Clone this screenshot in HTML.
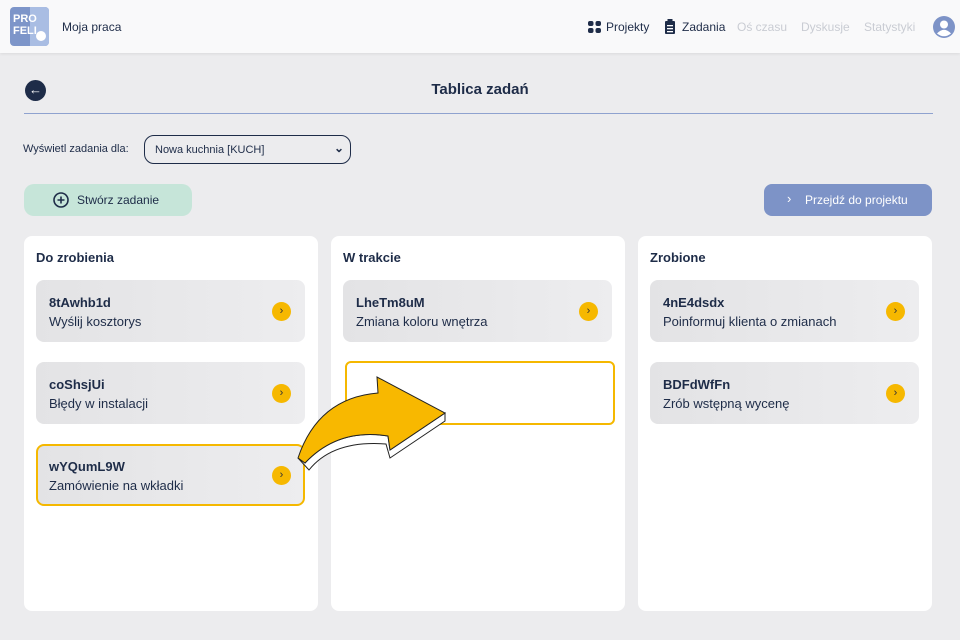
<!DOCTYPE html>
<html><head><meta charset="utf-8"><style>
*{box-sizing:border-box;margin:0;padding:0}
body{width:960px;height:640px;background:#ececee;font-family:"Liberation Sans",sans-serif;color:#1e2c48;position:relative;overflow:hidden}
.hdr{position:absolute;left:0;top:0;width:960px;height:53px;background:#f9f9fa;box-shadow:0 1px 3px rgba(0,0,0,.08)}
.abs{position:absolute}
.col{position:absolute;top:236px;width:294px;height:375px;background:#fff;border-radius:8px}
.col h3{position:absolute;left:12px;top:14px;font-size:13px;font-weight:bold}
.card{position:absolute;left:12px;width:269px;height:62px;border-radius:8px;background:linear-gradient(90deg,#e3e3e5,#ededef)}
.card .a{position:absolute;left:13px;top:15px;font-size:13px;font-weight:bold}
.card .b{position:absolute;left:13px;top:34px;font-size:13px}
.card .go{position:absolute;right:14px;top:22px;width:19px;height:19px;border-radius:50%;background:#f6b800;font-size:11px;text-align:center;line-height:19px;color:#333}
.hl{border:2px solid #f5b800;background:linear-gradient(90deg,#e3e3e5,#ededef)}
.hl .a,.hl .b{left:11px}.hl .a{top:13px}.hl .b{top:32px}.hl .go{right:12px;top:20px}
</style></head><body>
<div class="hdr">
 <div class="abs" style="left:10px;top:7px;width:39px;height:39px;border-radius:4px;background:#7d95c9;overflow:hidden">
  <div class="abs" style="left:20px;top:0;width:19px;height:39px;background:#a9bde3"></div>
  <div class="abs" style="left:3px;top:6px;font-size:11px;font-weight:bold;color:#fff;line-height:12px">PRO<br>FELI</div>
  <div class="abs" style="left:26px;top:24px;width:10px;height:10px;border-radius:50%;background:#fff"></div>
 </div>
 <div class="abs" style="left:62px;top:20px;font-size:12px">Moja praca</div>
 <svg class="abs" style="left:588px;top:21px" width="13" height="12"><rect x="0" y="0" width="5.5" height="5" rx="2" fill="#1e2c48"/><rect x="7.5" y="0" width="5.5" height="5" rx="2" fill="#1e2c48"/><rect x="0" y="7" width="5.5" height="5" rx="2" fill="#1e2c48"/><rect x="7.5" y="7" width="5.5" height="5" rx="2" fill="#1e2c48"/></svg>
 <div class="abs" style="left:606px;top:20px;font-size:12px">Projekty</div>
 <svg class="abs" style="left:664px;top:19px" width="12" height="15"><rect x="1" y="2" width="10" height="13" rx="1" fill="#1e2c48"/><rect x="3.5" y="0" width="5" height="3" fill="#1e2c48"/><rect x="3" y="6" width="6" height="1.3" fill="#fff"/><rect x="3" y="9" width="6" height="1.3" fill="#fff"/><rect x="3" y="12" width="6" height="1.3" fill="#fff"/></svg>
 <div class="abs" style="left:682px;top:20px;font-size:12px">Zadania</div>
 <div class="abs" style="left:737px;top:20px;font-size:12px;color:#c9ccd3">Oś czasu</div>
 <div class="abs" style="left:801px;top:20px;font-size:12px;color:#c9ccd3">Dyskusje</div>
 <div class="abs" style="left:864px;top:20px;font-size:12px;color:#c9ccd3">Statystyki</div>
 <svg class="abs" style="left:933px;top:16px" width="22" height="22"><circle cx="11" cy="11" r="11" fill="#7d93c7"/><circle cx="11" cy="8.5" r="4" fill="#fff"/><path d="M4 17.5 Q11 10 18 17.5 Q11 23 4 17.5Z" fill="#fff"/></svg>
</div>
<div class="abs" style="left:25px;top:80px;width:21px;height:21px;border-radius:50%;background:#1e2c48;color:#fff;font-size:13px;text-align:center;line-height:20px;font-weight:bold">←</div>
<div class="abs" style="left:0;width:960px;top:81px;text-align:center;font-size:15px;font-weight:bold">Tablica zadań</div>
<div class="abs" style="left:24px;top:113px;width:909px;height:1px;background:#8fa2cf"></div>
<div class="abs" style="left:23px;top:143px;font-size:11px">Wyświetl zadania dla:</div>
<div class="abs" style="left:144px;top:135px;width:207px;height:29px;border:1px solid #1e2c48;border-radius:10px;font-size:11px;padding:8px 10px">Nowa kuchnia [KUCH]<span style="position:absolute;right:6px;top:5px;font-weight:bold;font-size:12px">⌄</span></div>
<div class="abs" style="left:24px;top:184px;width:168px;height:32px;border-radius:10px;background:#c6e5d9;font-size:12px;padding-top:9px;padding-left:53px">Stwórz zadanie</div>
<svg class="abs" style="left:53px;top:192px" width="16" height="16"><circle cx="8" cy="8" r="7" fill="none" stroke="#1e2c48" stroke-width="1.6"/><path d="M8 4.5v7M4.5 8h7" stroke="#1e2c48" stroke-width="1.6"/></svg>
<div class="abs" style="left:764px;top:184px;width:168px;height:32px;border-radius:8px;background:#7d93c7;color:#fff;font-size:12px;padding-top:9px;padding-left:41px">Przejdź do projektu</div>
<div class="abs" style="left:787px;top:191px;color:#fff;font-size:13px">›</div>

<div class="col" style="left:24px"><h3>Do zrobienia</h3>
 <div class="card" style="top:44px"><div class="a">8tAwhb1d</div><div class="b">Wyślij kosztorys</div><div class="go">›</div></div>
 <div class="card" style="top:126px"><div class="a">coShsjUi</div><div class="b">Błędy w instalacji</div><div class="go">›</div></div>
 <div class="card hl" style="top:208px"><div class="a">wYQumL9W</div><div class="b">Zamówienie na wkładki</div><div class="go">›</div></div>
</div>
<div class="col" style="left:331px"><h3>W trakcie</h3>
 <div class="card" style="top:44px"><div class="a">LheTm8uM</div><div class="b">Zmiana koloru wnętrza</div><div class="go">›</div></div>
 <div class="abs" style="left:14px;top:125px;width:270px;height:64px;border:2px solid #f5b800;border-radius:6px"></div>
</div>
<div class="col" style="left:638px"><h3>Zrobione</h3>
 <div class="card" style="top:44px"><div class="a">4nE4dsdx</div><div class="b">Poinformuj klienta o zmianach</div><div class="go">›</div></div>
 <div class="card" style="top:126px"><div class="a">BDFdWfFn</div><div class="b">Zrób wstępną wycenę</div><div class="go">›</div></div>
</div>
<svg class="abs" style="left:0;top:0" width="960" height="640">
 <path d="M298 458 L309 470 Q333 440 386 444 L390 458 L445 421 L445 413 L390 450 L388 436 Q338 428 305 463Z" fill="#fff" stroke="#222" stroke-width="1"/>
 <path d="M298 458 Q318 398 378 393 L377 377 L445 413 L390 450 L388 436 Q338 428 305 463Z" fill="#f8b800" stroke="#222" stroke-width="1"/>
</svg>
</body></html>
